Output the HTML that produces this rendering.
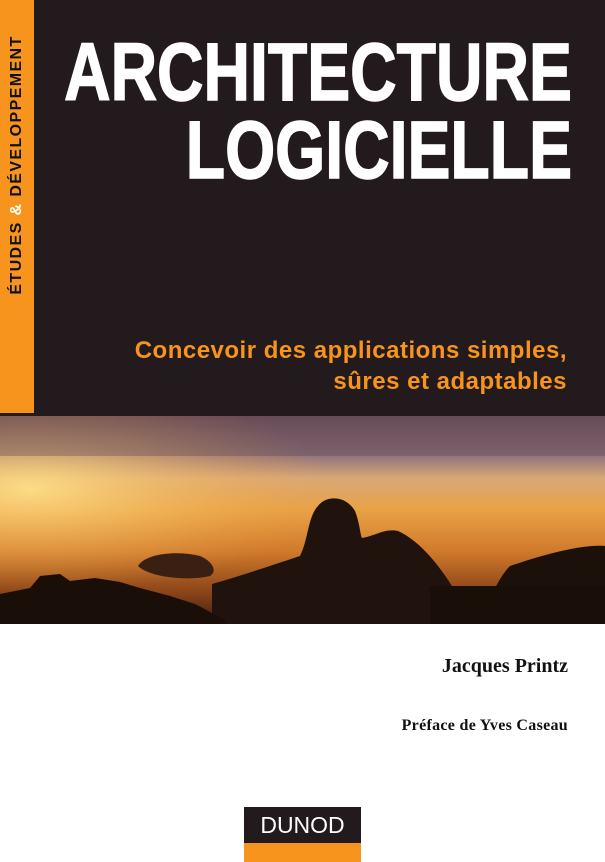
<!DOCTYPE html>
<html><head><meta charset="utf-8"><style>
*{margin:0;padding:0}
body{width:605px;height:862px;background:#fff;position:relative;overflow:hidden;font-family:"Liberation Sans",sans-serif}
#top{position:absolute;left:0;top:0;width:605px;height:416px;background:#231a1d}
#strip{position:absolute;left:0;top:0;width:34px;height:413px;background:#f7941d}
#vt{position:absolute;left:17px;top:165px;transform:translate(-50%,-50%) rotate(-90deg);white-space:nowrap;font-weight:bold;font-size:16px;color:#111;letter-spacing:1.4px}
#vt b{color:#fff}
.t{position:absolute;right:33px;color:#fff;font-weight:bold;font-size:82px;line-height:1;transform:scaleX(0.785);transform-origin:right top;white-space:nowrap;-webkit-text-stroke:1.5px #fff}
.sub{position:absolute;right:38px;color:#f7941d;font-weight:bold;font-size:24px;line-height:31px;text-align:right;top:335px;white-space:nowrap;letter-spacing:0.5px}
#photo{position:absolute;left:0;top:416px}
.serif{position:absolute;right:37px;font-family:"Liberation Serif",serif;font-weight:bold;color:#111}
</style></head><body>
<div id="top"></div>
<div id="strip"></div>
<div id="vt">ÉTUDES <b>&amp;</b> DÉVELOPPEMENT</div>
<div class="t" style="top:32px">ARCHITECTURE</div>
<div class="t" style="top:110px">LOGICIELLE</div>
<div class="sub">Concevoir des applications simples,<br>sûres et adaptables</div>
<svg id="photo" width="605" height="208" viewBox="0 0 605 208">
<defs>
<linearGradient id="sky" x1="0" y1="0" x2="0" y2="1">
<stop offset="0" stop-color="#6e4f5c"/>
<stop offset="0.18" stop-color="#8a6f7b"/>
<stop offset="0.3" stop-color="#d9a878"/>
<stop offset="0.45" stop-color="#e9a245"/>
<stop offset="0.65" stop-color="#d07a2c"/>
<stop offset="0.85" stop-color="#8a4418"/>
<stop offset="1" stop-color="#3a1e10"/>
</linearGradient>
<radialGradient id="glow" cx="0.05" cy="0.35" r="0.5">
<stop offset="0" stop-color="#ffe28a" stop-opacity="0.9"/>
<stop offset="1" stop-color="#f0a040" stop-opacity="0"/>
</radialGradient>
</defs>
<rect width="605" height="208" fill="url(#sky)"/>
<rect width="605" height="208" fill="url(#glow)"/>
<rect width="605" height="40" fill="#5e4450" opacity="0.35"/>
<path d="M138 150 C145 138 175 134 200 140 C212 145 218 155 210 160 C190 165 150 162 138 150Z" fill="#3a2012"/>
<path d="M212 168 C240 160 270 150 300 140 C308 125 308 100 318 90 C325 80 345 78 355 95 C360 108 360 118 362 122 C375 120 385 112 398 115 C420 125 440 150 455 175 L455 208 L212 208Z" fill="#20120c"/>
<path d="M510 150 C540 140 580 128 605 130 L605 208 L480 208 C490 180 500 160 510 150Z" fill="#1c100a"/>
<path d="M0 178 L30 172 L40 160 L60 158 L70 165 L95 162 L120 166 L140 172 L170 180 L195 188 L225 204 L225 208 L0 208Z" fill="#1a0e08"/>
<rect x="430" y="170" width="175" height="38" fill="#1a0e08"/>
</svg>
<div class="serif" style="top:655px;font-size:20px">Jacques Printz</div>
<div class="serif" style="top:717px;font-size:16px;letter-spacing:0.3px">Préface de Yves Caseau</div>
<div style="position:absolute;left:244px;top:807px;width:117px;height:36px;background:#231a1d;color:#fff;font-size:23px;text-align:center;line-height:37px">DUNOD</div>
<div style="position:absolute;left:244px;top:843px;width:117px;height:19px;background:#f7941d"></div>
</body></html>
